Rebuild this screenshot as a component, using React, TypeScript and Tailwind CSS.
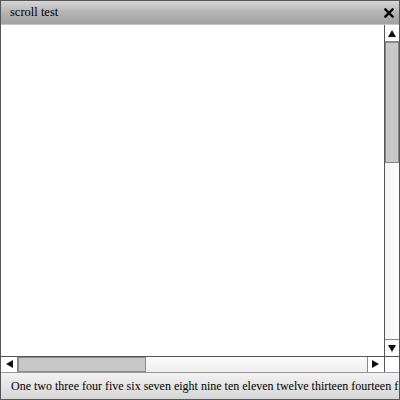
import React from 'react';

function Arrow({ dir }: { dir: 'up' | 'down' | 'left' | 'right' }) {
  const pts = {
    up: '4,1 8,8 0,8',
    down: '0,1 8,1 4,8',
    left: '1,4 8,0 8,8',
    right: '0,0 7,4 0,8',
  }[dir];
  return (
    <svg width="9" height="9" viewBox="0 0 9 9">
      <polygon points={pts} fill="#111" />
    </svg>
  );
}

export default function App() {
  const words =
    'One two three four five six seven eight nine ten eleven twelve thirteen fourteen fifteen sixteen seventeen eighteen nineteen twenty';

  return (
    <div className="w-[400px] h-[400px] flex flex-col border border-[#555] bg-white font-['Liberation_Serif',serif] text-[13px] text-black overflow-hidden">
      <div className="h-[24px] shrink-0 flex items-center justify-between pl-[9px] pr-[4px] border-b border-[#c4c4c4] bg-gradient-to-b from-[#d6d6d6] via-[#b4b4b4] to-[#a2a2a2]">
        <span className="text-[12.5px]">scroll test</span>
        <svg width="10" height="10" viewBox="0 0 10 10" className="mr-[1px]">
          <path d="M1.5 1.5 L8.5 8.5 M8.5 1.5 L1.5 8.5" stroke="#000" strokeWidth="2.4" strokeLinecap="square" />
        </svg>
      </div>

      <div className="flex-1 flex flex-col min-h-0">
        <div className="flex-1 flex min-h-0">
          <div className="flex-1 bg-white" />
          <div className="w-[15px] flex flex-col border-l border-[#555]">
            <div className="h-[17px] flex items-center justify-center bg-white border-b border-[#888]">
              <Arrow dir="up" />
            </div>
            <div className="flex-1 bg-gradient-to-r from-[#f4f4f4] to-[#fcfcfc]">
              <div className="h-[121px] bg-[#c8c8c8] border border-[#8a8a8a]" />
            </div>
            <div className="h-[17px] flex items-center justify-center bg-white border-t border-[#888]">
              <Arrow dir="down" />
            </div>
          </div>
        </div>
        <div className="h-[16px] shrink-0 flex border-t border-[#555]">
          <div className="flex-1 flex">
            <div className="w-[17px] flex items-center justify-center bg-white border-r border-[#888]">
              <Arrow dir="left" />
            </div>
            <div className="flex-1 bg-gradient-to-b from-[#fcfcfc] to-[#eeeeee]">
              <div className="w-[128px] h-full bg-[#c8c8c8] border border-[#8a8a8a]" />
            </div>
            <div className="w-[17px] flex items-center justify-center bg-white border-l border-[#888]">
              <Arrow dir="right" />
            </div>
          </div>
          <div className="w-[15px] bg-white border-l border-[#555]" />
        </div>
      </div>

      <div className="h-[27px] shrink-0 flex items-center pl-[10px] border-t border-[#999] bg-gradient-to-b from-[#f2f2f2] to-[#d6d6d6] whitespace-nowrap overflow-hidden text-[12px]">
        {words}
      </div>
    </div>
  );
}
